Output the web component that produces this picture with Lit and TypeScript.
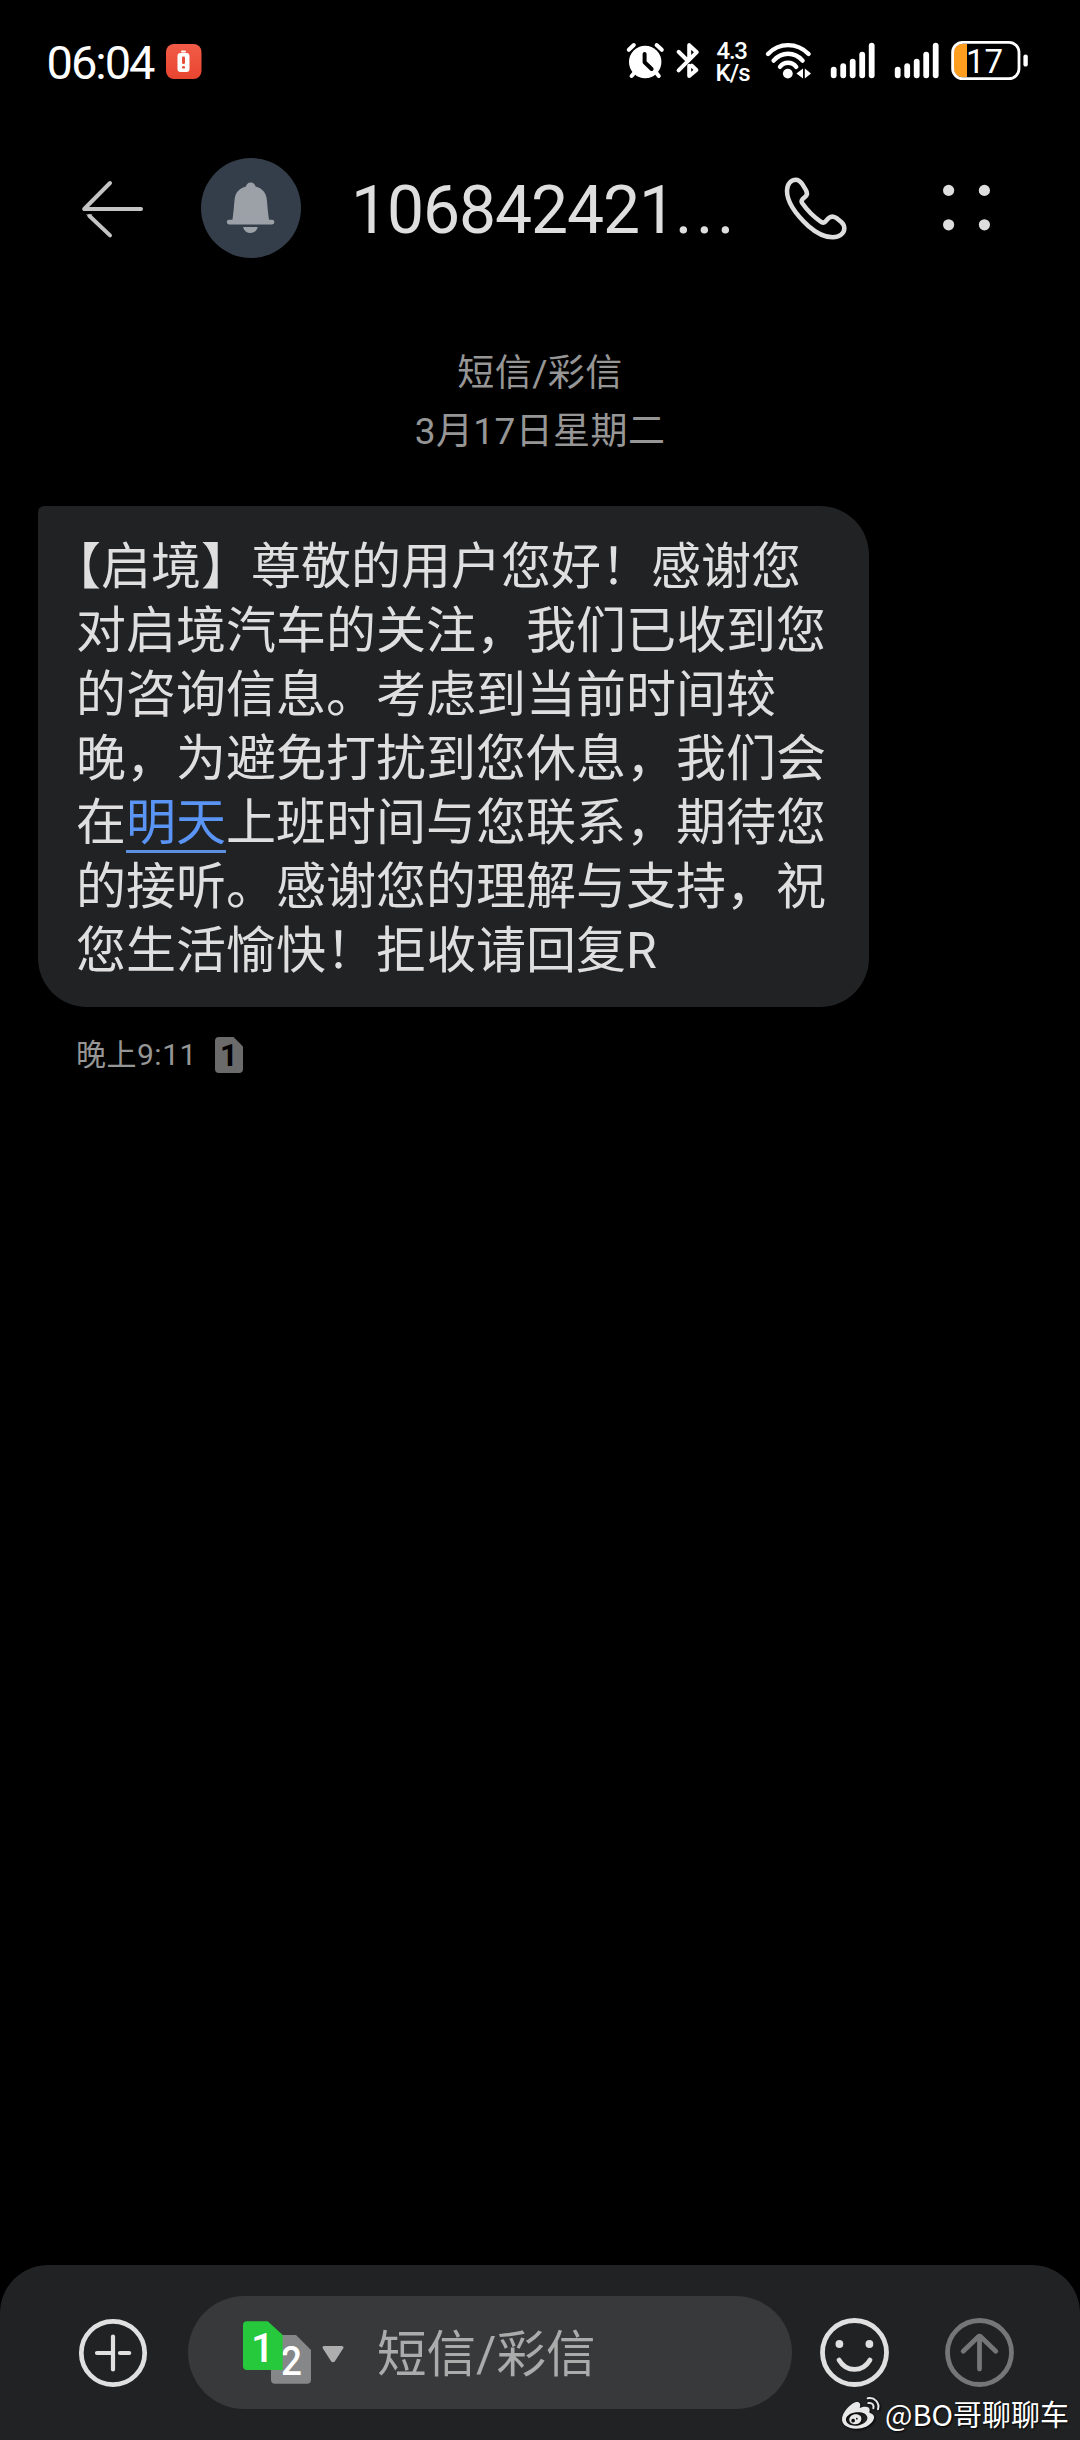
import { LitElement, html, svg, css } from "lit";
import { customElement } from "lit/decorators.js";

const SIGNAL_TOPS = [66.7, 63.3, 58.7, 51.7, 42.8];

@customElement("status-bar")
class StatusBar extends LitElement {
  static styles = css`
    :host { display: flex; height: 110px; padding-left: 46px; }
    svg { display: block; height: 110px; flex: none; overflow: visible; }
    text { font-family: Roboto, "Liberation Sans", sans-serif; fill: #fff; }
    .spacer { flex: none; width: 424px; }
    .clock { font-size: 47px; }
    .speed { font-size: 24px; font-weight: 500; }
    .level { font-size: 33px; }
  `;

  private signal(x: number) {
    return SIGNAL_TOPS.map((top, i) => svg`
      <line x1=${x + i * 9.5} x2=${x + i * 9.5} y1=${top + 2.9} y2="75.3"
        stroke="#fff" stroke-width="5.8" stroke-linecap="round"/>`);
  }

  render() {
    return html`
      <svg width="119" viewBox="46 0 119 110">
        <text class="clock" x="46.500" y="78.5" textLength="109">06:04</text>
      </svg>
      <svg width="38" viewBox="165 0 38 110">
        <defs>
          <linearGradient id="alert" x1="0" y1="0" x2="0" y2="1">
            <stop offset="0" stop-color="#f25c48"/><stop offset="1" stop-color="#e8452f"/>
          </linearGradient>
        </defs>
        <rect x="166" y="44" width="35.5" height="35" rx="8" fill="url(#alert)"/>
        <rect x="181" y="50.5" width="5" height="2" rx="1" fill="#fff"/>
        <rect x="177.5" y="53" width="12" height="19" rx="3" fill="#fff"/>
        <rect x="182" y="56.5" width="3" height="7.5" rx="1.2" fill="#e8503c"/>
        <rect x="182" y="66" width="3" height="2.6" rx="1.2" fill="#e8503c"/>
      </svg>
      <div class="spacer"></div>
      <svg width="45" viewBox="627 0 45 110">
        <circle cx="645.2" cy="62" r="16.2" fill="#fff"/>
        <path d="M628.8 49.8L633.8 45M656.6 45L661.8 49.8M635 72L631.6 76M655.6 72L658.8 76"
          fill="none" stroke="#fff" stroke-width="4" stroke-linecap="round"/>
        <path d="M644.6 54V62.3L651.6 69" fill="none" stroke="#000" stroke-width="4"
          stroke-linecap="round" stroke-linejoin="round"/>
      </svg>
      <svg width="40" viewBox="672 0 40 110">
        <g fill="none" stroke="#fff" stroke-width="4" stroke-linecap="round" stroke-linejoin="round">
          <path d="M678.6 51.8L687 60M678.6 70.4L696.8 52.2L689.2 45.2V58"/>
          <path d="M689.2 65.8V76L696.4 70L691.8 65.6"/>
        </g>
      </svg>
      <svg width="50" viewBox="712 0 50 110">
        <text class="speed" x="716.5" y="58.6" textLength="31.5">4.3</text>
        <text class="speed" x="715.5" y="81" textLength="35">K/s</text>
      </svg>
      <svg width="62" viewBox="762 0 62 110">
        <g fill="none" stroke="#fff" stroke-width="4.4" stroke-linecap="round">
          <path d="M768 54C779 42.2 797 42.2 808.6 54"/>
          <path d="M773.6 60.6C781.6 51.4 794.6 51.4 802.6 60.6"/>
          <path d="M780 66.8C784 61.4 792 61.4 796.2 66.8"/>
        </g>
        <circle cx="787.8" cy="73.6" r="4.9" fill="#fff"/>
        <path d="M796.4 73.5L803 68.6V78.4ZM811 73.5L804.8 68.6V78.4Z" fill="#fff"/>
      </svg>
      <svg width="64" viewBox="824 0 64 110">${this.signal(833.7)}</svg>
      <svg width="60" viewBox="888 0 60 110">${this.signal(897.7)}</svg>
      <svg width="84" viewBox="948 0 84 110">
        <path d="M967 44H961.5A7.5 7.5 0 0 0 954 51.5V69.5A7.5 7.5 0 0 0 961.5 77H967Z" fill="#ff9d1e"/>
        <rect x="952.6" y="42.4" width="66.4" height="36.2" rx="10" fill="none" stroke="#fff" stroke-width="2.8"/>
        <rect x="1023.4" y="54.4" width="4.4" height="12.2" rx="2.2" fill="#fff"/>
        <text class="level" x="966" y="73" textLength="37">17</text>
      </svg>`;
  }
}

@customElement("chat-header")
class ChatHeader extends LitElement {
  static styles = css`
    :host { display: flex; height: 200px; margin-top: -2px; }
    svg { display: block; height: 200px; flex: none; }
    .title {
      flex: none; width: 425px; margin: 0; white-space: nowrap; color: #dedede;
      font: 400 66px/205px Roboto, "Liberation Sans", sans-serif;
      letter-spacing: -1.1px; padding-left: 1px; box-sizing: border-box;
    }
    .dots { letter-spacing: 3.6px; }
  `;

  render() {
    return html`
      <svg width="190" viewBox="0 108 190 200">
        <g fill="none" stroke="#c4c4c4" stroke-width="4" stroke-linecap="round" stroke-linejoin="round">
          <path d="M110 183L84.2 209H141"/>
          <path d="M89.5 216L110 235.4"/>
        </g>
        <path d="M86 214.4H92.5L90 218Z" fill="#c4c4c4"/>
      </svg>
      <svg width="160" viewBox="190 108 160 200">
        <circle cx="251" cy="208" r="50" fill="#343e4b"/>
        <g fill="#9ca1a8">
          <circle cx="250.7" cy="187.4" r="4.9"/>
          <path d="M232.3 221C234 210 234 204 234.8 198C236 190 243 186 250.7 186S265.4 190 266.6 198C267.4 204 267.6 210 269.2 221Z"/>
          <rect x="226.8" y="219.8" width="47.6" height="4.6" rx="2.3"/>
          <path d="M243 227H257.8C256.6 231 254 233 250.4 233S244.2 231 243 227Z"/>
        </g>
      </svg>
      <h1 class="title">106842421<span class="dots">...</span></h1>
      <svg width="145" viewBox="775 108 145 200">
        <g transform="translate(540 140) scale(.33333)">
          <path fill="none" stroke="#dedede" stroke-width="13.5" stroke-linejoin="round"
            d="M768 119C752 119 741 133 741 153C741 190 775 230 805 258C830 280 855 292 878 292C898 292 913 281 913 265C913 256 909 250 903 245L892 236C880 227 871 229 864 236L857 244C852 249 847 249 841 244C822 231 801 210 787 190C783 184 784 181 788 177L797 169C803 163 802 157 797 149L786 131C780 123 776 119 768 119Z"/>
        </g>
      </svg>
      <svg width="100" viewBox="920 108 100 200">
        <g fill="#dedede">
          <circle cx="948.6" cy="190.4" r="5.6"/><circle cx="984.4" cy="190.4" r="5.6"/>
          <circle cx="948.6" cy="224.8" r="5.6"/><circle cx="984.4" cy="224.8" r="5.6"/>
        </g>
      </svg>`;
  }
}

@customElement("message-thread")
class MessageThread extends LitElement {
  static styles = css`
    :host { display: block; flex: 1; padding-top: 37px; }
    .day {
      text-align: center; color: #969696;
      font: 400 37px/58px Roboto, "Noto Sans CJK SC", sans-serif; letter-spacing: 0.4px;
    }
    .bubble {
      width: 831px; height: 501px; box-sizing: border-box; margin: 45px 0 0 38px;
      padding: 24px 0 0 38px; background: #212224; border-radius: 6px 49px 49px 49px;
      color: #dfdfdf; font: 400 50px/64px "Noto Sans CJK SC", sans-serif;
      white-space: nowrap; text-spacing-trim: space-all; text-indent: -25px;
    }
    .latin { font-family: Roboto, sans-serif; line-height: 1; }
    .link {
      color: #5a94f5; text-decoration: underline 3px #5b8fe0;
      text-underline-offset: 10px; text-decoration-skip-ink: none;
    }
    .meta { display: flex; align-items: center; height: 60px; margin: 18px 0 0 76px; }
    .time {
      color: #969696; width: 139px; letter-spacing: 0.5px;
      font: 400 30px/60px Roboto, "Noto Sans CJK SC", sans-serif;
    }
    .sim { display: block; }
    .sim text { font: 700 31px Roboto, sans-serif; }
  `;

  render() {
    return html`
      <div class="day">短信/彩信</div>
      <div class="day">3月17日星期二</div>
      <div class="bubble">【启境】尊敬的用户您好！感谢您<br>对启境汽车的关注，我们已收到您<br>的咨询信息。考虑到当前时间较<br>晚，为避免打扰到您休息，我们会<br>在<span class="link">明天</span>上班时间与您联系，期待您<br>的接听。感谢您的理解与支持，祝<br>您生活愉快！拒收请回复<span class="latin">R</span></div>
      <div class="meta">
        <span class="time">晚上9:11</span>
        <svg class="sim" width="28" height="36" viewBox="0 0 28 36">
          <path d="M4 0H18.5L28 9.5V32A4 4 0 0 1 24 36H4A4 4 0 0 1 0 32V4A4 4 0 0 1 4 0Z" fill="#6b6b6b"/>
          <text x="5" y="29" fill="#000">1</text>
        </svg>
      </div>`;
  }
}

@customElement("message-composer")
class MessageComposer extends LitElement {
  static styles = css`
    :host { display: flex; height: 175px; background: #212224; border-radius: 48px 48px 0 0; position: relative; }
    svg { display: block; flex: none; }
    .field {
      flex: none; display: flex; width: 604px; height: 113px; margin-top: 31px;
      background: #38393b; border-radius: 56.5px;
    }
    .placeholder {
      color: #aaabab; white-space: nowrap; margin-left: -1px;
      font: 400 49.5px/118px Roboto, "Noto Sans CJK SC", sans-serif;
    }
    .num { fill: #fff; font: 500 41px Roboto, sans-serif; }
    .mark {
      position: absolute; right: 11px; bottom: 6px; display: flex; align-items: center;
      color: #fff; text-shadow: 1px 1px 2px #000;
      font: 400 29px/42px "Noto Sans CJK SC", sans-serif; white-space: nowrap;
    }
    .weibo { margin-right: 4px; filter: drop-shadow(1px 1px 1px #000); }
  `;

  render() {
    return html`
      <svg width="188" height="175" viewBox="0 2265 188 175">
        <circle cx="113" cy="2353" r="31.7" fill="none" stroke="#e0e0e0" stroke-width="4.7"/>
        <path d="M113 2336.6V2369.4M97 2353H113M120 2353H129.2" fill="none" stroke="#e0e0e0"
          stroke-width="4.2" stroke-linecap="round"/>
      </svg>
      <div class="field">
        <svg width="190" height="113" viewBox="188 2296 190 113">
          <path d="M275 2335H296L311 2350V2379.7A4 4 0 0 1 307 2383.7H275A4 4 0 0 1 271 2379.7V2339A4 4 0 0 1 275 2335Z" fill="#868789"/>
          <text class="num" x="281" y="2375.3" textLength="21" lengthAdjust="spacingAndGlyphs">2</text>
          <path d="M247 2321.3H267.7L282.7 2335V2370H247A4 4 0 0 1 243 2366V2325.3A4 4 0 0 1 247 2321.3Z" fill="#27c93c"/>
          <text class="num" x="251" y="2361.8">1</text>
          <path d="M324 2347.5H342L333.8 2360.3Q333 2361 332.2 2360.3Z" fill="#adaead" stroke="#adaead"
            stroke-width="3" stroke-linejoin="round"/>
        </svg>
        <span class="placeholder">短信/彩信</span>
      </div>
      <svg width="288" height="175" viewBox="792 2265 288 175">
        <g fill="none" stroke="#e0e0e0" stroke-width="4.8" stroke-linecap="round">
          <circle cx="854.5" cy="2352.5" r="32"/>
          <path d="M839 2360C846.5 2372.6 862.5 2372.6 870 2360"/>
        </g>
        <circle cx="839.4" cy="2344" r="3.9" fill="#e0e0e0"/>
        <circle cx="869.4" cy="2344" r="3.9" fill="#e0e0e0"/>
        <g fill="none" stroke="#757678" stroke-width="4.8" stroke-linecap="round" stroke-linejoin="round">
          <circle cx="979.5" cy="2352.5" r="32"/>
          <path d="M979.5 2336.4V2369M963.2 2351.2L978 2337Q979.5 2335.6 981 2337L995.8 2351.2"/>
        </g>
      </svg>
      <div class="mark">
        <svg class="weibo" width="40" height="36" viewBox="305 435 120 108">
          <path fill="#e8e8e8" fill-rule="evenodd" d="M308 508C308 490 330 463 348 457C360 453 366 462 361 474C375 468 392 468 391 481C391 485 388 487 394 490C404 494 408 502 401 512C392 527 372 536 350 536C325 536 308 525 308 508ZM320 511C322 523 337 529 353 527C371 525 386 514 384 502C382 490 367 485 350 487C332 489 318 500 320 511Z"/>
          <path fill="#e8e8e8" fill-rule="evenodd" d="M330 511C329 501 338 493 349 493C361 493 368 500 366 509C364 518 355 524 345 523C336 522 331 518 330 511ZM336 513A5.500 5.500 0 1 0 347 511A5.500 5.500 0 1 0 336 513ZM350 506A2.500 2.500 0 1 0 355 506A2.500 2.500 0 1 0 350 506Z"/>
          <g fill="none" stroke="#e8e8e8" stroke-width="6" stroke-linecap="round">
            <path d="M385 445C406 441 422 458 416 478"/>
            <path d="M387 459C398 457 405 465 402 475"/>
          </g>
        </svg>
        <span>@BO哥聊聊车</span>
      </div>`;
  }
}

@customElement("app-root")
class AppRoot extends LitElement {
  static styles = css`
    :host { display: flex; flex-direction: column; width: 1080px; height: 2440px; background: #000; overflow: hidden; }
  `;

  render() {
    return html`
      <status-bar></status-bar>
      <chat-header></chat-header>
      <message-thread></message-thread>
      <message-composer></message-composer>`;
  }
}
